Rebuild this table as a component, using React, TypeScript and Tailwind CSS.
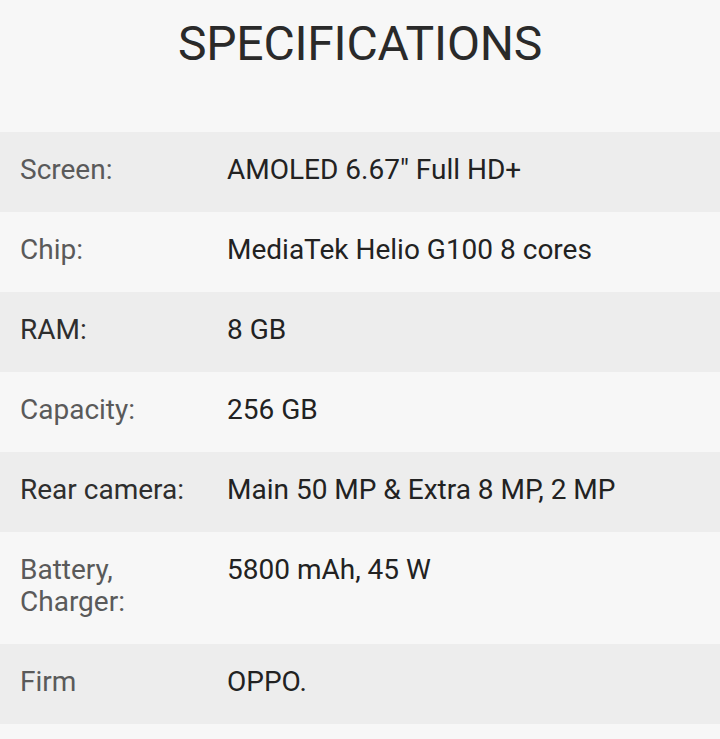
import React from "react";

const rows: { label: React.ReactNode; value: string; dark: boolean; strong?: boolean }[] = [
  { label: "Screen:", value: "AMOLED 6.67\u2033 Full HD+", dark: true },
  { label: "Chip:", value: "MediaTek Helio G100 8 cores", dark: false },
  { label: "RAM:", value: "8 GB", dark: true, strong: true },
  { label: "Capacity:", value: "256 GB", dark: false },
  { label: "Rear camera:", value: "Main 50 MP & Extra 8 MP, 2 MP", dark: true, strong: true },
  {
    label: (
      <>
        Battery,
        <br />
        Charger:
      </>
    ),
    value: "5800 mAh, 45 W",
    dark: false,
  },
  { label: "Firm", value: "OPPO.", dark: true },
];

export default function App() {
  return (
    <div
      className="w-[720px] h-[739px] bg-[#f7f7f7] overflow-hidden"
      style={{ fontFamily: "Roboto, 'Noto Sans', sans-serif" }}
    >
      <div className="h-[132px] pt-[16px] text-center">
        <h1 className="text-[48px] leading-[55px] font-normal text-[#2a2a2a] tracking-[-0.2px]">
          SPECIFICATIONS
        </h1>
      </div>
      {rows.map((r, i) => (
        <div
          key={i}
          className={
            "grid grid-cols-[207px_1fr] pt-[22px] pb-[26px] pl-5 text-[28px] leading-[32px] " +
            (r.dark ? "bg-[#ededed]" : "bg-[#f7f7f7]")
          }
        >
          <div className={r.strong ? "text-[#2e2e2e]" : "text-[#5a5a5a]"}>{r.label}</div>
          <div className="text-[#222222]">{r.value}</div>
        </div>
      ))}
    </div>
  );
}
